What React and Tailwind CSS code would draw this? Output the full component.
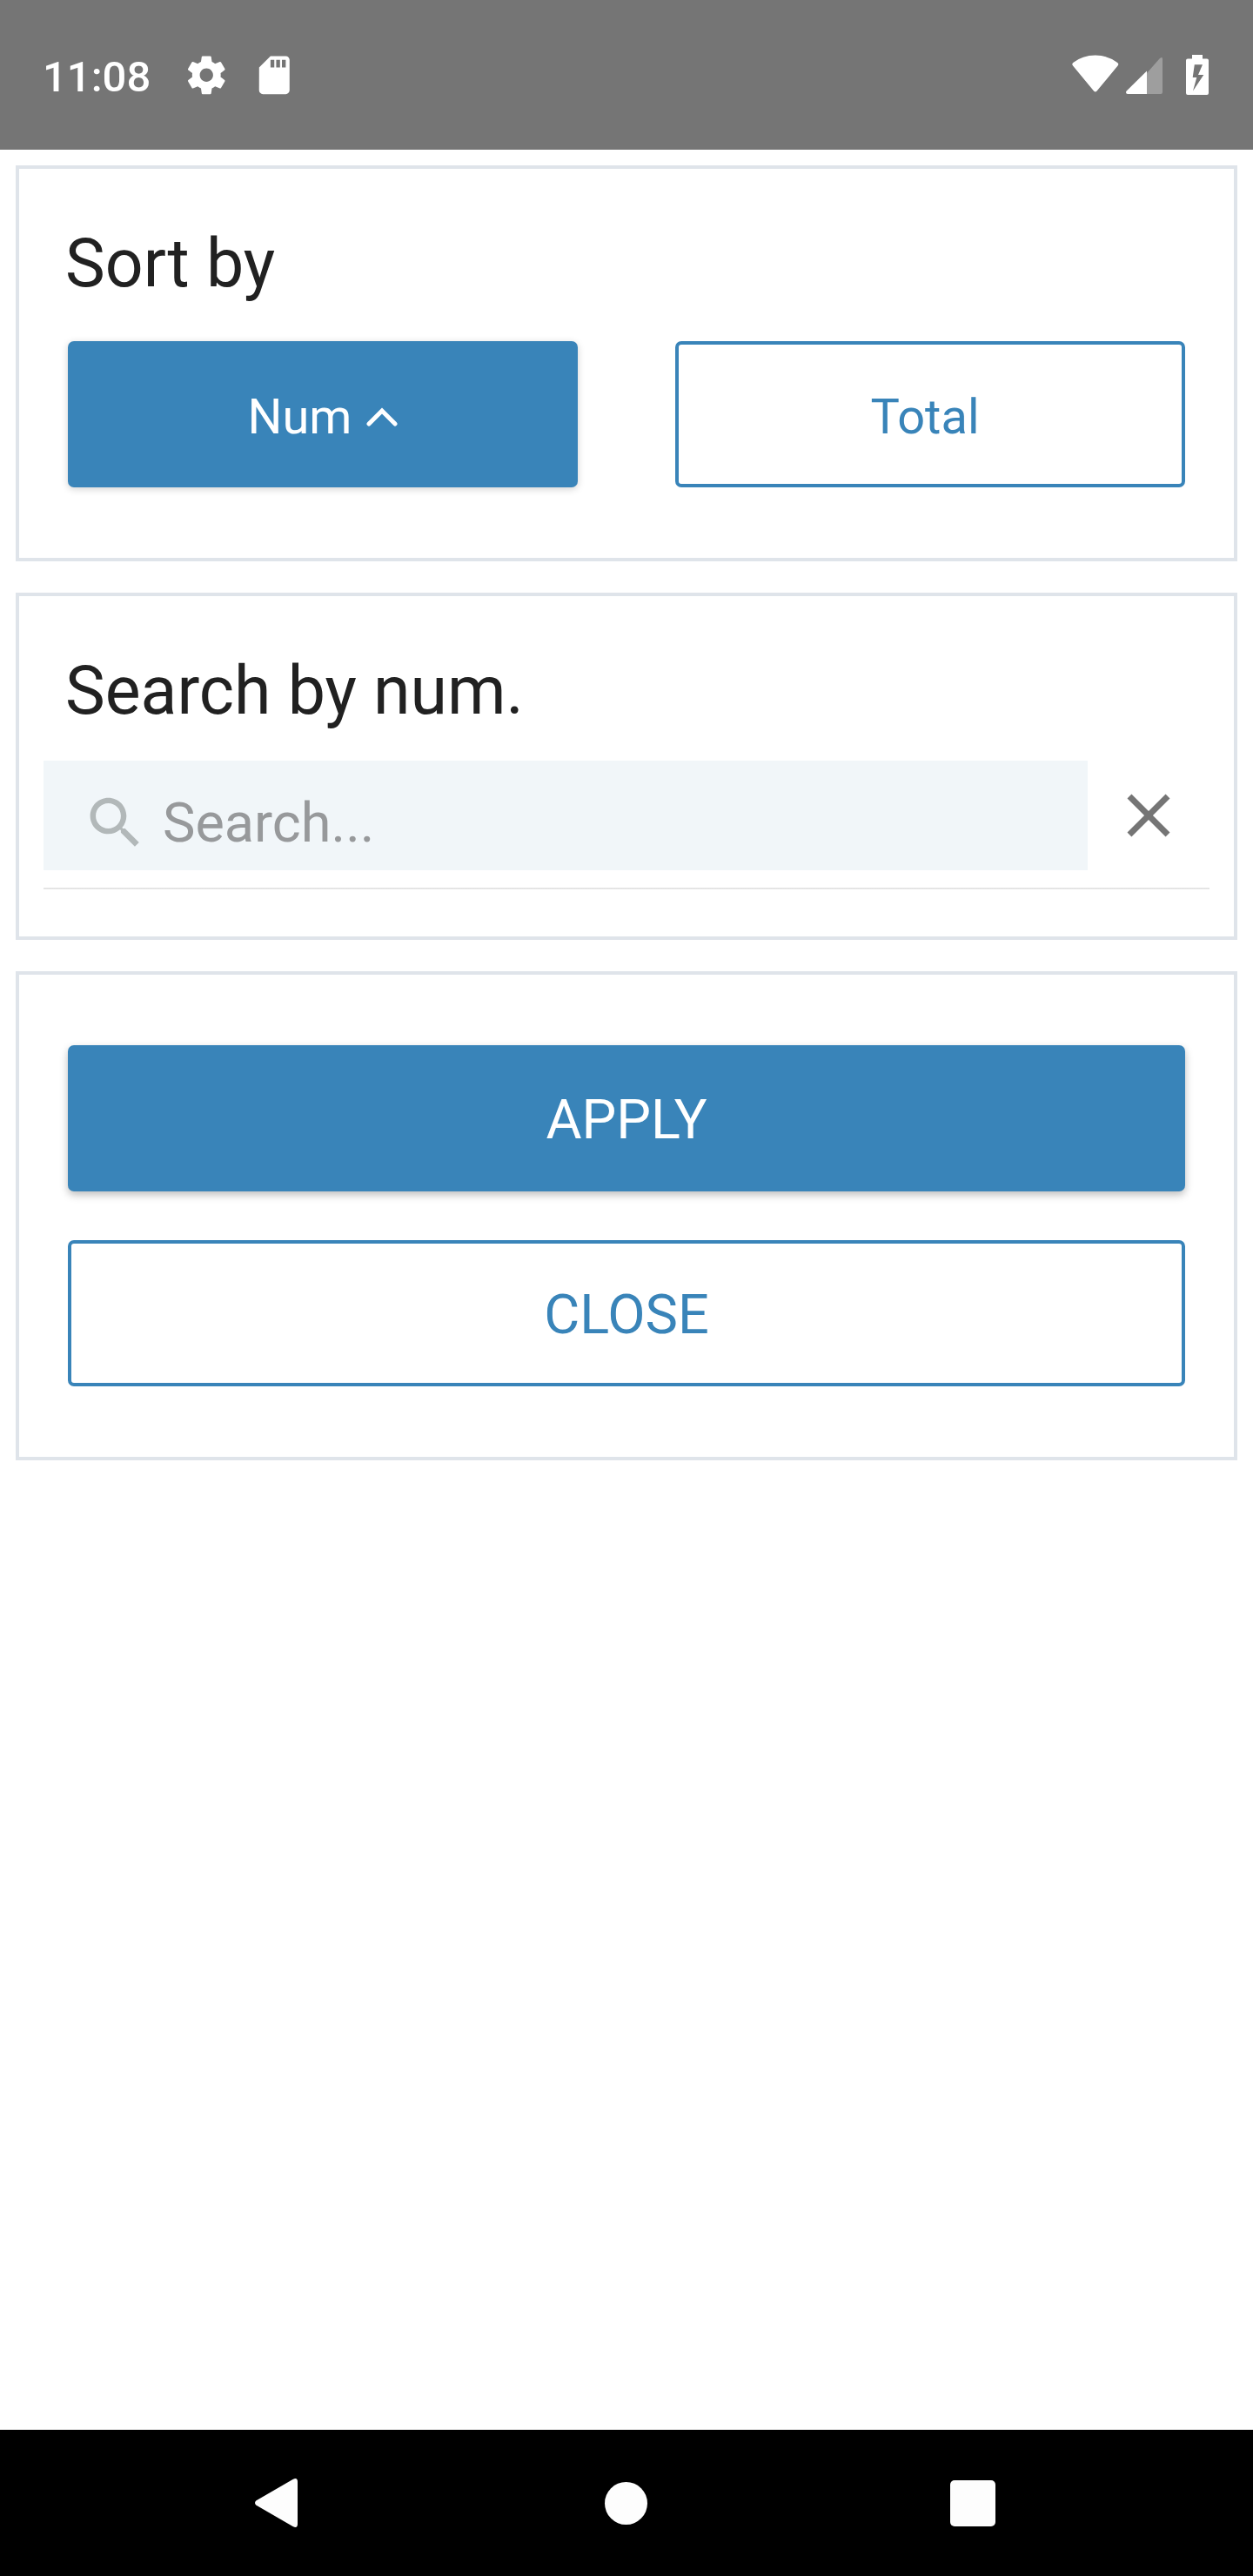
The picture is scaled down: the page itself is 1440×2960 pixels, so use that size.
const SETTINGS =
  "M19.43 12.98c.04-.32.07-.64.07-.98s-.03-.66-.07-.98l2.11-1.65c.19-.15.24-.42.12-.64l-2-3.46c-.12-.22-.39-.3-.61-.22l-2.49 1c-.52-.4-1.08-.73-1.69-.98l-.38-2.65C14.46 2.18 14.25 2 14 2h-4c-.25 0-.46.18-.49.42l-.38 2.65c-.61.25-1.17.59-1.69.98l-2.49-1c-.23-.09-.49 0-.61.22l-2 3.46c-.13.22-.07.49.12.64l2.11 1.65c-.04.32-.07.65-.07.98s.03.66.07.98l-2.11 1.65c-.19.15-.24.42-.12.64l2 3.46c.12.22.39.3.61.22l2.49-1c.52.4 1.08.73 1.69.98l.38 2.65c.03.24.24.42.49.42h4c.25 0 .46-.18.49-.42l.38-2.65c.61-.25 1.17-.59 1.69-.98l2.49 1c.23.09.49 0 .61-.22l2-3.46c.12-.22.07-.49-.12-.64l-2.11-1.65zM12 15.5c-1.93 0-3.5-1.57-3.5-3.5s1.57-3.5 3.5-3.5 3.5 1.57 3.5 3.5-1.57 3.5-3.5 3.5z";
const SD_CARD =
  "M18 2h-8L4.02 8 4 20c0 1.1.9 2 2 2h12c1.1 0 2-.9 2-2V4c0-1.1-.9-2-2-2zm-6 6h-2V4h2v4zm3 0h-2V4h2v4zm3 0h-2V4h2v4z";
const SEARCH =
  "M15.5 14h-.79l-.28-.27C15.41 12.59 16 11.11 16 9.5 16 5.91 13.09 3 9.5 3S3 5.91 3 9.5 5.91 16 9.5 16c1.61 0 3.09-.59 4.23-1.57l.27.28v.79l5 4.99L20.49 19l-4.99-5zm-6 0C7.01 14 5 11.99 5 9.5S7.01 5 9.5 5 14 7.01 14 9.5 11.99 14 9.5 14z";
const CLOSE =
  "M19 6.41L17.59 5 12 10.59 6.41 5 5 6.41 10.59 12 5 17.59 6.41 19 12 13.41 17.59 19 19 17.59 13.41 12z";

function Icon({ d, className }) {
  return (
    <svg viewBox="0 0 24 24" fill="currentColor" className={className}>
      <path d={d} />
    </svg>
  );
}

function StatusBar() {
  return (
    <header className="flex h-[172px] items-center bg-[#757575] pl-[49px] pr-[51px] text-white">
      <span className="w-[162px] pt-[5px] text-[49px] leading-[58px] font-medium">11:08</span>
      <Icon d={SETTINGS} className="size-[52.5px]" />
      <Icon d={SD_CARD} className="ml-[25px] size-[52.5px]" />
      <svg viewBox="0 0 54 44" className="mb-[2px] ml-auto h-[44px] w-[54px]" fill="currentColor">
        <path d="M1 12.5Q-.6 10.600 1.300 9Q12 .5 26.800 .5Q41.500 .5 52.200 9Q54.200 10.600 52.600 12.500L28.600 41.500Q26.800 43.600 25 41.500Z" />
      </svg>
      <svg viewBox="0 0 42 42" className="ml-[8px] mt-[2px] h-[42px] w-[42px]" fill="currentColor">
        <path d="M24 18L38.500 1.500Q39.800 0 41 0Q42 0 42 2V40Q42 42 40 42H24Z" opacity=".3" />
        <path d="M24 15.500V18V42H2Q0 42 0 40Q0 39.200 .7 38.500Z" />
      </svg>
      <svg viewBox="0 0 26 46" className="ml-[27px] h-[46px] w-[26px]" fill="currentColor">
        <path
          fillRule="evenodd"
          d="M7 0H19V4.500H24Q26 4.500 26 6.500V44Q26 46 24 46H2Q0 46 0 44V6.500Q0 4.500 2 4.500H7ZM9.800 11.200L7.700 26H12.300L8 41.500L20.300 23H14L19 11.200Z"
        />
      </svg>
    </header>
  );
}

function Card({ className, children }) {
  return <section className={"border-4 border-[#dfe4ea] " + className}>{children}</section>;
}

function Button({ className, children }) {
  return (
    <button className={"flex h-[168px] items-center justify-center rounded-[7px] pt-[5px] " + className}>
      {children}
    </button>
  );
}

export default function App() {
  return (
    <div className="flex h-[2960px] w-[1440px] flex-col bg-white font-['Roboto',sans-serif]">
      <StatusBar />
      <main className="flex flex-1 flex-col gap-[36px] px-[18px] pt-[18px]">
        <Card className="h-[455px] px-[56px] pt-[64px]">
          <h2 className="-ml-[3px] h-[134px] text-[77px] leading-[90px] text-[#212121]">Sort by</h2>
          <div className="grid grid-cols-2 gap-[112px]">
            <Button className="bg-[#3984b9] text-[56px] text-white shadow-[0_2px_8px_rgba(0,0,0,0.18)]">
              Num
              <svg viewBox="0 0 36 22" className="ml-[17px] h-[22px] w-[36px]" fill="none" stroke="currentColor" strokeWidth="5" strokeLinecap="round" strokeLinejoin="miter">
                <path d="M3 19L18 4L33 19" />
              </svg>
            </Button>
            <Button className="border-4 border-[#3984b9] pr-[12px] text-[56px] text-[#3984b9]">Total</Button>
          </div>
        </Card>

        <Card className="h-[399px] px-[28px] pt-[64px]">
          <h2 className="ml-[25px] h-[125px] text-[77px] leading-[90px] text-[#212121]">Search by num.</h2>
          <div className="flex h-[146px] items-start">
            <div className="flex h-[126px] w-[1200px] items-center bg-[#f1f6f9] pl-[44px]">
              <Icon d={SEARCH} className="mt-[16px] size-[77px] text-[#b2b8b9]" />
              <span className="ml-[16px] mt-[18px] text-[63px] leading-[74px] text-[#97999b]">Search...</span>
            </div>
            <button className="ml-[28px] mt-[21px]">
              <Icon d={CLOSE} className="size-[84px] text-[#757575]" />
            </button>
          </div>
          <hr className="h-[2px] border-0 bg-gradient-to-b from-[#dcdcdc] to-[#efefef]" />
        </Card>

        <Card className="flex h-[562px] flex-col gap-[56px] px-[56px] pt-[81px]">
          <Button className="bg-[#3984b9] text-[63px] text-white shadow-[0_4px_10px_rgba(0,0,0,0.26)]">APPLY</Button>
          <Button className="border-4 border-[#3984b9] text-[63px] text-[#3984b9]">CLOSE</Button>
        </Card>
      </main>

      <nav className="flex h-[168px] items-center bg-black pl-[293px] text-[#fdfdfd]">
        <svg viewBox="0 0 49 56" className="h-[56px] w-[49px]" fill="currentColor">
          <path d="M1.200 30.500Q-1.200 28 1.200 25.500L43.500 1Q49 -2 49 4V52Q49 58 43.500 55Z" />
        </svg>
        <span className="ml-[353px] size-[49px] rounded-full bg-[#fdfdfd]" />
        <span className="ml-[348px] h-[53px] w-[52px] rounded-[5px] bg-[#fdfdfd]" />
      </nav>
    </div>
  );
}
